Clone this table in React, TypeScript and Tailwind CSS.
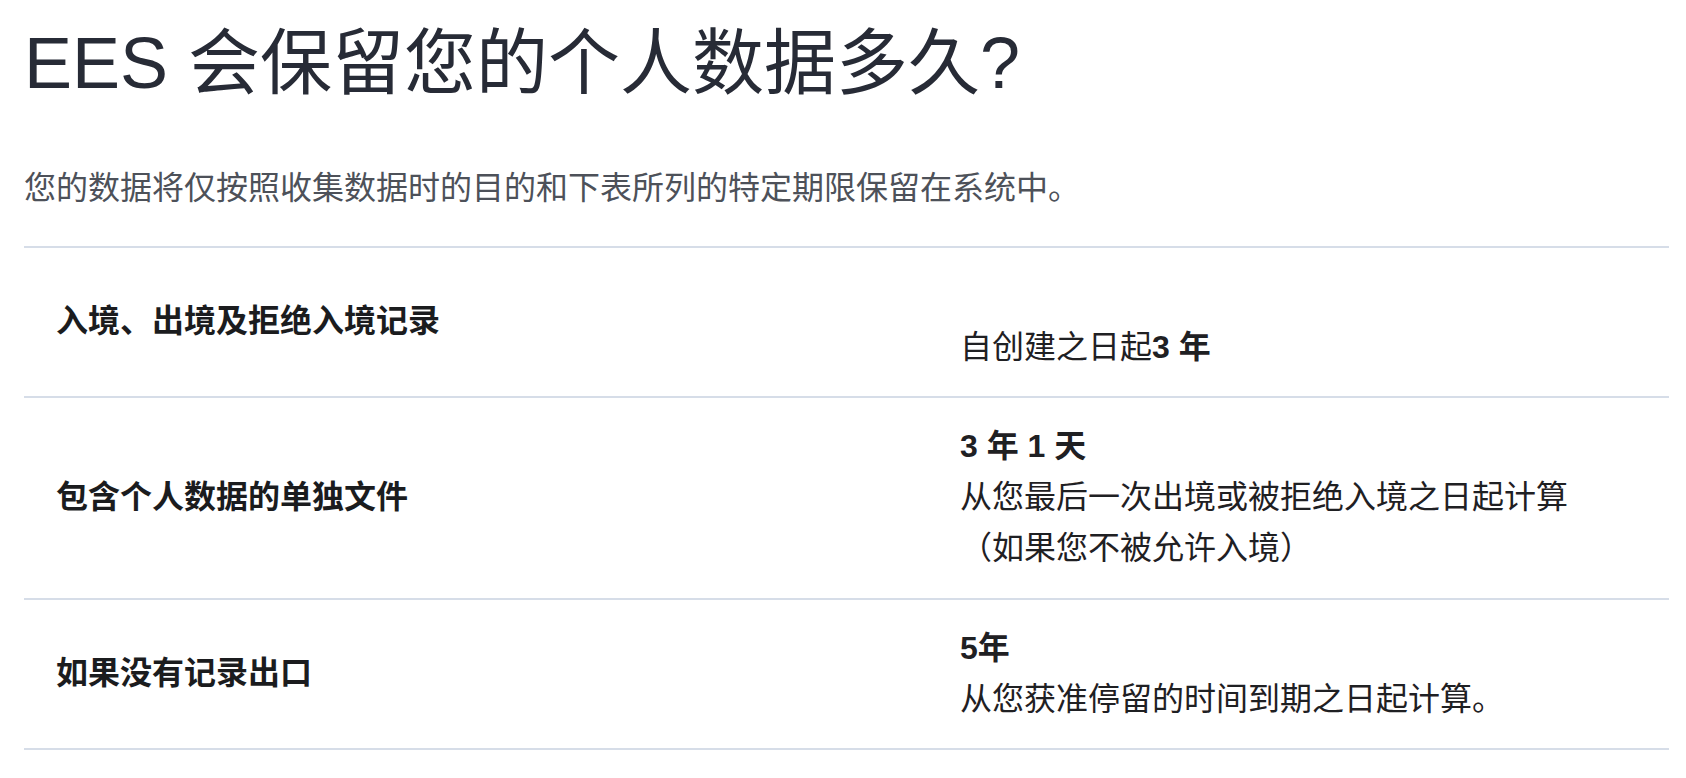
const FONT = "font-['Liberation_Sans','Noto_Sans_CJK_SC',sans-serif]";

type Row = {
  label: string;
  value: React.ReactNode;
};

const ROWS: Row[] = [
  {
    label: '入境、出境及拒绝入境记录',
    value: (
      <>
        <div className="h-[51.2px]" />
        <div>
          自创建之日起<strong className="font-bold">3 年</strong>
        </div>
      </>
    ),
  },
  {
    label: '包含个人数据的单独文件',
    value: (
      <>
        <div>
          <strong className="font-bold">3 年 1 天</strong>
        </div>
        <div>从您最后一次出境或被拒绝入境之日起计算</div>
        <div>（如果您不被允许入境）</div>
      </>
    ),
  },
  {
    label: '如果没有记录出口',
    value: (
      <>
        <div>
          <strong className="font-bold">5年</strong>
        </div>
        <div>从您获准停留的时间到期之日起计算。</div>
      </>
    ),
  },
];

export default function App() {
  return (
    <div className={`${FONT} min-h-screen bg-white pl-[24px] pr-[17px]`}>
      {/* Heading */}
      <h1 className="pt-[20px] text-[72px] leading-[1.2] font-normal text-[#272b36]">
        EES 会保留您的个人数据多久?
      </h1>

      <p className="mt-[57px] text-[32px] leading-[1.6] text-[#4d5159]">
        您的数据将仅按照收集数据时的目的和下表所列的特定期限保留在系统中。
      </p>

      {/* Retention table */}
      <div className="mt-[31px] border-t-2 border-[#d6dde8]">
        {ROWS.map((row) => (
          <div
            key={row.label}
            className="grid grid-cols-[936px_1fr] border-b-2 border-[#d6dde8] py-[23px] text-[32px] leading-[1.6]"
          >
            <div className="self-center pl-[32px] font-bold text-[#1b1c1e]">{row.label}</div>
            <div className="text-[#1f2023]">{row.value}</div>
          </div>
        ))}
      </div>
    </div>
  );
}
